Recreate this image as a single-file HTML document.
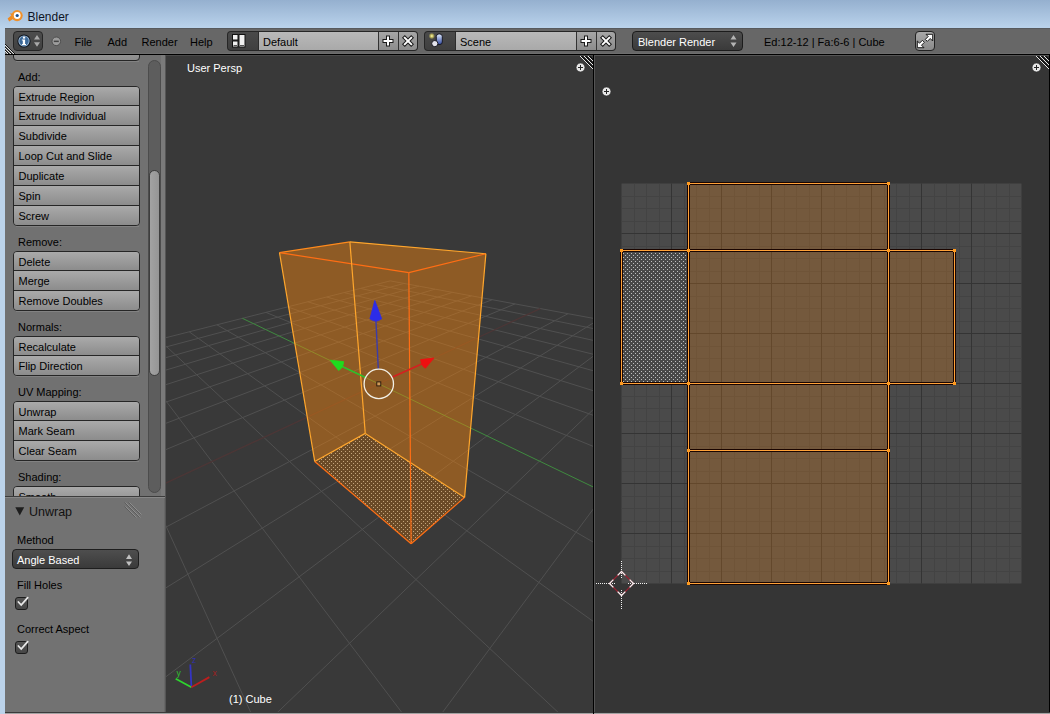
<!DOCTYPE html>
<html><head><meta charset="utf-8"><style>
*{margin:0;padding:0;box-sizing:border-box}
html,body{width:1050px;height:714px;overflow:hidden;background:#c8d7e6;font-family:"Liberation Sans", sans-serif}
.a{position:absolute}
.t{position:absolute;white-space:pre;font-size:11px;line-height:13px;color:#000}
.btn{position:absolute;left:13px;width:127px;background:linear-gradient(#a9a9a9,#8b8b8b);border:1px solid #2a2a2a}
</style></head><body>
<div class="a" style="left:0;top:0;width:1050px;height:28px;background:linear-gradient(#95b0cf,#bad3ec)"></div>
<div class="a" style="left:0;top:28px;width:5px;height:686px;background:#bcd3ea"></div>
<div class="t" style="left:27.5px;top:10px;font-size:12px;line-height:14px;color:#0e1424">Blender</div>
<div class="a" style="left:5px;top:28px;width:1045px;height:1px;background:#575a5e"></div><div class="a" style="left:5px;top:29px;width:1045px;height:24px;background:#676767"></div><div class="a" style="left:5px;top:53px;width:1045px;height:1px;background:#6e6e6e"></div><div class="a" style="left:13px;top:31px;width:30px;height:20px;border-radius:4px;background:linear-gradient(#4d4d4d,#414141);border:1px solid #262626"></div><svg class="a" style="left:13px;top:31px" width="30" height="20" viewBox="13 31 30 20">
<circle cx="24" cy="41" r="6.6" fill="#0e1520"/>
<circle cx="24" cy="41" r="5.6" fill="#9fbcd8"/>
<circle cx="24" cy="41" r="4.7" fill="#3b6898"/>
<rect x="22.9" y="36.6" width="2.3" height="2" fill="#fff"/>
<path d="M21.9 39.5H25.1V43.9H26V45.1H21.9V43.9H22.8V40.6H21.9Z" fill="#fff"/>
<path d="M34 39.6L37 35L40 39.6Z M34 42.2L37 46.8L40 42.2Z" fill="#a9a9a9"/>
</svg><svg class="a" style="left:50px;top:35px" width="13" height="13" viewBox="50 35 13 13">
<circle cx="56.3" cy="41.3" r="4.3" fill="#9c9c9c" stroke="#4e4e4e" stroke-width="1"/>
<rect x="53.8" y="40.6" width="5" height="1.5" fill="#454545"/>
</svg><div class="t" style="left:74.5px;top:36px;font-size:11px;color:#000">File</div><div class="t" style="left:107.5px;top:36px;font-size:11px;color:#000">Add</div><div class="t" style="left:141.5px;top:36px;font-size:11px;color:#000">Render</div><div class="t" style="left:190px;top:36px;font-size:11px;color:#000">Help</div><div class="a" style="left:227px;top:31px;width:191px;height:20px;border-radius:4px;background:#262626"></div><div class="a" style="left:228px;top:32px;width:30px;height:18px;border-radius:3px 0 0 3px;background:linear-gradient(#4a4a4a,#3f3f3f)"></div><div class="a" style="left:259px;top:32px;width:119px;height:18px;background:linear-gradient(#b9b9b9,#a9a9a9)"></div><div class="a" style="left:258px;top:32px;width:1px;height:18px;background:#2c2c2c"></div><div class="a" style="left:378px;top:32px;width:20px;height:18px;background:linear-gradient(#a6a6a6,#8c8c8c)"></div><div class="a" style="left:398px;top:32px;width:19px;height:18px;border-radius:0 3px 3px 0;background:linear-gradient(#a6a6a6,#8c8c8c)"></div><div class="a" style="left:378px;top:32px;width:1px;height:18px;background:#333"></div><div class="a" style="left:398px;top:32px;width:1px;height:18px;background:#333"></div><div class="t" style="left:263px;top:36px;font-size:11px;color:#000">Default</div><svg class="a" style="left:378px;top:31px" width="40" height="20" viewBox="378 31 40 20">
<path d="M382.5 41H393.5M388.0 35.5V46.5" stroke="#1a1a1a" stroke-width="4"/>
<path d="M383.5 41H392.5M388.0 36.5V45.5" stroke="#fff" stroke-width="2"/>
<path d="M403.4 36.4L412.6 45.6M412.6 36.4L403.4 45.6" stroke="#1a1a1a" stroke-width="4"/>
<path d="M404.1 37.1L411.9 44.9M411.9 37.1L404.1 44.9" stroke="#fff" stroke-width="2"/>
</svg><svg class="a" style="left:227px;top:31px" width="31" height="20" viewBox="227 31 31 20">
<rect x="232.5" y="34.5" width="5.5" height="5.5" fill="#f0f0f0" stroke="#111" stroke-width="1"/>
<rect x="232.5" y="41" width="5.5" height="6" fill="#f0f0f0" stroke="#111" stroke-width="1"/>
<rect x="239" y="34.5" width="6" height="12.5" fill="#f0f0f0" stroke="#111" stroke-width="1"/>
<rect x="233.5" y="45" width="3.5" height="1" fill="#555"/><rect x="240" y="45" width="4" height="1" fill="#555"/>
</svg><div class="a" style="left:424px;top:31px;width:192px;height:20px;border-radius:4px;background:#262626"></div><div class="a" style="left:425px;top:32px;width:30px;height:18px;border-radius:3px 0 0 3px;background:linear-gradient(#4a4a4a,#3f3f3f)"></div><div class="a" style="left:456px;top:32px;width:120px;height:18px;background:linear-gradient(#b9b9b9,#a9a9a9)"></div><div class="a" style="left:455px;top:32px;width:1px;height:18px;background:#2c2c2c"></div><div class="a" style="left:576px;top:32px;width:20px;height:18px;background:linear-gradient(#a6a6a6,#8c8c8c)"></div><div class="a" style="left:596px;top:32px;width:19px;height:18px;border-radius:0 3px 3px 0;background:linear-gradient(#a6a6a6,#8c8c8c)"></div><div class="a" style="left:576px;top:32px;width:1px;height:18px;background:#333"></div><div class="a" style="left:596px;top:32px;width:1px;height:18px;background:#333"></div><div class="t" style="left:460px;top:36px;font-size:11px;color:#000">Scene</div><svg class="a" style="left:576px;top:31px" width="40" height="20" viewBox="576 31 40 20">
<path d="M580.5 41H591.5M586.0 35.5V46.5" stroke="#1a1a1a" stroke-width="4"/>
<path d="M581.5 41H590.5M586.0 36.5V45.5" stroke="#fff" stroke-width="2"/>
<path d="M601.4 36.4L610.6 45.6M610.6 36.4L601.4 45.6" stroke="#1a1a1a" stroke-width="4"/>
<path d="M602.1 37.1L609.9 44.9M609.9 37.1L602.1 44.9" stroke="#fff" stroke-width="2"/>
</svg><svg class="a" style="left:424px;top:31px" width="31" height="20" viewBox="424 31 31 20">
<defs><radialGradient id="glow"><stop offset="0" stop-color="#ffffc0"/><stop offset="0.4" stop-color="#c8c060"/><stop offset="1" stop-color="#c8c060" stop-opacity="0"/></radialGradient>
<linearGradient id="cyl" x1="0" x2="0" y1="0" y2="1"><stop offset="0" stop-color="#e0ecff"/><stop offset="1" stop-color="#3048a0"/></linearGradient></defs>
<circle cx="431.8" cy="36" r="3.2" fill="url(#glow)"/>
<rect x="436.3" y="34" width="6" height="10.5" rx="2.5" fill="url(#cyl)" stroke="#101018" stroke-width="0.9"/>
<circle cx="434.8" cy="43.6" r="3.1" fill="#e4e4ec" stroke="#101018" stroke-width="0.9"/>
</svg><div class="a" style="left:632px;top:31px;width:111px;height:20px;border-radius:4px;background:linear-gradient(#4d4d4d,#3a3a3a);border:1px solid #1c1c1c"></div><div class="t" style="left:638px;top:36px;font-size:11px;color:#fff">Blender Render</div><svg class="a" style="left:725px;top:31px" width="15" height="20" viewBox="725 31 15 20">
<path d="M730.5 39.6L733.5 35L736.5 39.6Z M730.5 42.4L733.5 47L736.5 42.4Z" fill="#b4b4b4"/></svg><div class="t" style="left:764px;top:36px;font-size:11px;color:#000">Ed:12-12 | Fa:6-6 | Cube</div><div class="a" style="left:915px;top:31px;width:20px;height:20px;border-radius:4px;background:linear-gradient(#a8a8a8,#8a8a8a);border:1px solid #222"></div><svg class="a" style="left:915px;top:31px" width="20" height="20" viewBox="915 31 20 20">
<path d="M926 34.3H932.7V41L930.2 38.5L927.3 41.4L925.3 39.4L928.2 36.5Z" fill="#fff" stroke="#1a1a1a" stroke-width="1" stroke-linejoin="round"/>
<path d="M917.3 41V47.7H924L921.5 45.2L924.4 42.3L922.4 40.3L919.5 43.2Z" fill="#fff" stroke="#1a1a1a" stroke-width="1" stroke-linejoin="round"/>
</svg>
<div class="a" style="left:5px;top:54px;width:1045px;height:1px;background:#000"></div>
<div class="a" style="left:5px;top:55px;width:160px;height:441px;background:#717171;overflow:hidden"><div class="a" style="left:8px;top:-20px;width:127px;height:26px;border-radius:4px;border:1px solid #262626;background:linear-gradient(#aaaaaa,#8c8c8c)"></div><div class="a" style="left:11px;top:6px;width:123px;height:1px;background:#828282"></div><div class="t" style="left:13px;top:16.20px;color:#000">Add:</div><div class="a" style="left:8px;top:31px;width:127px;height:140px;border-radius:4px;border:1px solid #262626;overflow:hidden"><div class="a" style="left:0;top:0px;width:125px;height:18px;background:linear-gradient(#aaaaaa,#8c8c8c)"></div><div class="t" style="left:4.5px;top:3.70px;color:#000">Extrude Region</div><div class="a" style="left:0;top:19px;width:125px;height:19px;background:linear-gradient(#aaaaaa,#8c8c8c)"></div><div class="a" style="left:0;top:18px;width:125px;height:1px;background:#262626"></div><div class="t" style="left:4.5px;top:22.70px;color:#000">Extrude Individual</div><div class="a" style="left:0;top:39px;width:125px;height:19px;background:linear-gradient(#aaaaaa,#8c8c8c)"></div><div class="a" style="left:0;top:38px;width:125px;height:1px;background:#262626"></div><div class="t" style="left:4.5px;top:42.70px;color:#000">Subdivide</div><div class="a" style="left:0;top:59px;width:125px;height:19px;background:linear-gradient(#aaaaaa,#8c8c8c)"></div><div class="a" style="left:0;top:58px;width:125px;height:1px;background:#262626"></div><div class="t" style="left:4.5px;top:62.70px;color:#000">Loop Cut and Slide</div><div class="a" style="left:0;top:79px;width:125px;height:19px;background:linear-gradient(#aaaaaa,#8c8c8c)"></div><div class="a" style="left:0;top:78px;width:125px;height:1px;background:#262626"></div><div class="t" style="left:4.5px;top:82.70px;color:#000">Duplicate</div><div class="a" style="left:0;top:99px;width:125px;height:19px;background:linear-gradient(#aaaaaa,#8c8c8c)"></div><div class="a" style="left:0;top:98px;width:125px;height:1px;background:#262626"></div><div class="t" style="left:4.5px;top:102.70px;color:#000">Spin</div><div class="a" style="left:0;top:119px;width:125px;height:19px;background:linear-gradient(#aaaaaa,#8c8c8c)"></div><div class="a" style="left:0;top:118px;width:125px;height:1px;background:#262626"></div><div class="t" style="left:4.5px;top:122.70px;color:#000">Screw</div></div><div class="a" style="left:11px;top:171px;width:123px;height:1px;background:#828282"></div><div class="t" style="left:13px;top:181.20px;color:#000">Remove:</div><div class="a" style="left:8px;top:196px;width:127px;height:60px;border-radius:4px;border:1px solid #262626;overflow:hidden"><div class="a" style="left:0;top:0px;width:125px;height:18px;background:linear-gradient(#aaaaaa,#8c8c8c)"></div><div class="t" style="left:4.5px;top:3.70px;color:#000">Delete</div><div class="a" style="left:0;top:19px;width:125px;height:19px;background:linear-gradient(#aaaaaa,#8c8c8c)"></div><div class="a" style="left:0;top:18px;width:125px;height:1px;background:#262626"></div><div class="t" style="left:4.5px;top:22.70px;color:#000">Merge</div><div class="a" style="left:0;top:39px;width:125px;height:19px;background:linear-gradient(#aaaaaa,#8c8c8c)"></div><div class="a" style="left:0;top:38px;width:125px;height:1px;background:#262626"></div><div class="t" style="left:4.5px;top:42.70px;color:#000">Remove Doubles</div></div><div class="a" style="left:11px;top:256px;width:123px;height:1px;background:#828282"></div><div class="t" style="left:13px;top:266.20px;color:#000">Normals:</div><div class="a" style="left:8px;top:281px;width:127px;height:40px;border-radius:4px;border:1px solid #262626;overflow:hidden"><div class="a" style="left:0;top:0px;width:125px;height:18px;background:linear-gradient(#aaaaaa,#8c8c8c)"></div><div class="t" style="left:4.5px;top:3.70px;color:#000">Recalculate</div><div class="a" style="left:0;top:19px;width:125px;height:19px;background:linear-gradient(#aaaaaa,#8c8c8c)"></div><div class="a" style="left:0;top:18px;width:125px;height:1px;background:#262626"></div><div class="t" style="left:4.5px;top:22.70px;color:#000">Flip Direction</div></div><div class="a" style="left:11px;top:321px;width:123px;height:1px;background:#828282"></div><div class="t" style="left:13px;top:331.20px;color:#000">UV Mapping:</div><div class="a" style="left:8px;top:346px;width:127px;height:60px;border-radius:4px;border:1px solid #262626;overflow:hidden"><div class="a" style="left:0;top:0px;width:125px;height:18px;background:linear-gradient(#aaaaaa,#8c8c8c)"></div><div class="t" style="left:4.5px;top:3.70px;color:#000">Unwrap</div><div class="a" style="left:0;top:19px;width:125px;height:19px;background:linear-gradient(#aaaaaa,#8c8c8c)"></div><div class="a" style="left:0;top:18px;width:125px;height:1px;background:#262626"></div><div class="t" style="left:4.5px;top:22.70px;color:#000">Mark Seam</div><div class="a" style="left:0;top:39px;width:125px;height:19px;background:linear-gradient(#aaaaaa,#8c8c8c)"></div><div class="a" style="left:0;top:38px;width:125px;height:1px;background:#262626"></div><div class="t" style="left:4.5px;top:42.70px;color:#000">Clear Seam</div></div><div class="a" style="left:11px;top:406px;width:123px;height:1px;background:#828282"></div><div class="t" style="left:13px;top:416.20px;color:#000">Shading:</div><div class="a" style="left:8px;top:431px;width:127px;height:40px;border-radius:4px;border:1px solid #262626;overflow:hidden"><div class="a" style="left:0;top:0px;width:125px;height:18px;background:linear-gradient(#aaaaaa,#8c8c8c)"></div><div class="t" style="left:4.5px;top:3.70px;color:#000">Smooth</div><div class="a" style="left:0;top:19px;width:125px;height:19px;background:linear-gradient(#aaaaaa,#8c8c8c)"></div><div class="a" style="left:0;top:18px;width:125px;height:1px;background:#262626"></div><div class="t" style="left:4.5px;top:22.70px;color:#000">Flat</div></div><div class="a" style="left:11px;top:471px;width:123px;height:1px;background:#828282"></div><div class="a" style="left:143px;top:5px;width:13px;height:432.5px;border-radius:6.5px;background:#5d5d5d;border:1px solid #4c4c4c"></div><div class="a" style="left:144px;top:114.5px;width:11px;height:206.0px;border-radius:5.5px;background:linear-gradient(90deg,#a2a2a2,#959595);border:1px solid #3e3e3e"></div><div class="a" style="left:156px;top:0;width:4px;height:441px;background:#7a7a7a"></div></div><div class="a" style="left:5px;top:496px;width:160px;height:1px;background:#3c3c3c"></div><div class="a" style="left:5px;top:497px;width:160px;height:1px;background:#878787"></div><div class="a" style="left:5px;top:498px;width:160px;height:214px;background:#727272"></div><div class="a" style="left:165px;top:55px;width:1px;height:657px;background:#565656"></div><div class="a" style="left:164px;top:498px;width:1px;height:214px;background:#686868"></div><svg class="a" style="left:14px;top:506px" width="12" height="12" viewBox="14 506 12 12"><path d="M15.3 507.2H24.2L19.75 515.6Z" fill="#1e1e1e"/></svg><div class="t" style="left:29px;top:504.5px;font-size:12.5px;line-height:15px;color:#111">Unwrap</div><svg class="a" style="left:122px;top:500px" width="22" height="21" viewBox="122 500 22 21"><path d="M124.5 502.5L139.5 517.5M128.5 502.5L140.5 514.5M124.5 506.5L135.5 517.5" stroke="#5c5c5c" stroke-width="1"/><path d="M125.5 502.5L140.5 517.5M129.5 502.5L141.5 514.5M125.5 506.5L136.5 517.5" stroke="#8e8e8e" stroke-width="1"/></svg><div class="t" style="left:17px;top:534px;color:#000">Method</div><div class="a" style="left:12px;top:549px;width:127px;height:20px;border-radius:4px;background:linear-gradient(#4e4e4e,#3a3a3a);border:1px solid #1e1e1e"></div><div class="t" style="left:17px;top:554px;color:#fff">Angle Based</div><svg class="a" style="left:122px;top:550px" width="14" height="18" viewBox="122 550 14 18"><path d="M126 559L129 554.3L132 559Z M126 561.4L129 566L132 561.4Z" fill="#c0c0c0"/></svg><div class="t" style="left:17px;top:579px;color:#000">Fill Holes</div><div class="t" style="left:17px;top:623px;color:#000">Correct Aspect</div><div class="a" style="left:15px;top:597px;width:13px;height:13px;border-radius:3px;background:linear-gradient(#545454,#464646);border:1px solid #1c1c1c"></div><svg class="a" style="left:15px;top:595px" width="16" height="16" viewBox="0 0 16 16"><path d="M3.4 7L6.2 10L12.7 2.6" stroke="#e8e8e8" stroke-width="1.8" fill="none" stroke-linecap="round" stroke-linejoin="miter"/></svg><div class="a" style="left:15px;top:641px;width:13px;height:13px;border-radius:3px;background:linear-gradient(#545454,#464646);border:1px solid #1c1c1c"></div><svg class="a" style="left:15px;top:639px" width="16" height="16" viewBox="0 0 16 16"><path d="M3.4 7L6.2 10L12.7 2.6" stroke="#e8e8e8" stroke-width="1.8" fill="none" stroke-linecap="round" stroke-linejoin="miter"/></svg>
<svg width="427" height="657" viewBox="166 55 427 657" style="position:absolute;left:166px;top:55px"><defs><pattern id="stip3" x="0" y="0" width="4" height="4" patternUnits="userSpaceOnUse"><rect width="4" height="4" fill="#6a4a27"/><rect x="3" y="1" width="1" height="1" fill="#c4a57c"/><rect x="1" y="3" width="1" height="1" fill="#c4a57c"/></pattern></defs><rect x="166" y="55" width="427" height="657" fill="#393939"/><rect x="166" y="55" width="427" height="1" fill="#4a4a4a"/><path d="M547.17 -1112.42L-46.50 391.49M547.17 -1112.42L897.66 374.52M307.31 -2130.02L3.83 378.74M1131.23 -2591.97L828.06 361.67M-1811.96 -11120.91L48.81 367.36M-9517.84 24384.61L768.74 350.73M1760.01 4033.00L89.23 357.12M-874.91 2490.05L717.56 341.28M1237.44 1816.02L125.77 347.87M-447.74 1407.93L672.96 333.05M1095.65 1214.47L158.94 339.47M-295.81 1023.05L633.75 325.82M1029.59 934.20L189.21 331.81M-217.92 825.74L599.01 319.41M991.37 772.07L216.93 324.79M-170.55 705.74L568.02 313.69M948.93 592.04L265.91 312.38M-115.82 567.10L515.07 303.92M935.93 536.89L287.66 306.88M-98.59 523.44L492.28 299.71M925.91 494.35L307.84 301.77M-85.14 489.37L471.51 295.88M917.94 460.55L326.62 297.01M-74.35 462.04L452.51 292.37M911.45 433.04L344.14 292.58M-65.51 439.64L435.05 289.15M906.07 410.21L360.52 288.43M-58.12 420.94L418.96 286.18M901.54 390.96L375.87 284.54M-51.87 405.09L404.08 283.44M897.66 374.52L390.28 280.89M-46.50 391.49L390.28 280.89" stroke="#505050" stroke-width="1" fill="none"/><path d="M-138.70 625.06L540.19 308.55" stroke="#4c3636" stroke-width="1.3" fill="none"/><path d="M966.46 666.38L242.41 318.34" stroke="#3f8a3f" stroke-width="1" fill="none"/><polygon points="279.49,252.70 349.87,241.84 485.88,253.75 464.58,497.39 411.13,543.70 314.74,461.46" fill="rgba(250,135,12,0.44)"/><polygon points="314.74,461.46 365.27,433.38 464.58,497.39 411.13,543.70" fill="url(#stip3)"/><line x1="279.49" y1="252.70" x2="349.87" y2="241.84" stroke="#ff8a1c" stroke-width="1.2"/><line x1="349.87" y1="241.84" x2="485.88" y2="253.75" stroke="#ffa62c" stroke-width="1.2"/><line x1="485.88" y1="253.75" x2="408.82" y2="272.64" stroke="#ff6e14" stroke-width="1.2"/><line x1="408.82" y1="272.64" x2="279.49" y2="252.70" stroke="#ff6e14" stroke-width="1.2"/><line x1="314.74" y1="461.46" x2="365.27" y2="433.38" stroke="#ffa62c" stroke-width="1.2"/><line x1="365.27" y1="433.38" x2="464.58" y2="497.39" stroke="#ffa62c" stroke-width="1.2"/><line x1="464.58" y1="497.39" x2="411.13" y2="543.70" stroke="#ff6e14" stroke-width="1.2"/><line x1="411.13" y1="543.70" x2="314.74" y2="461.46" stroke="#ff6e14" stroke-width="1.2"/><line x1="279.49" y1="252.70" x2="314.74" y2="461.46" stroke="#ffa62c" stroke-width="1.2"/><line x1="349.87" y1="241.84" x2="365.27" y2="433.38" stroke="#ffa62c" stroke-width="1.2"/><line x1="485.88" y1="253.75" x2="464.58" y2="497.39" stroke="#ffa62c" stroke-width="1.2"/><line x1="408.82" y1="272.64" x2="411.13" y2="543.70" stroke="#ff6e14" stroke-width="1.2"/><line x1="378.3" y1="369" x2="375.8" y2="318" stroke="#3c3ca8" stroke-width="1.4"/><path d="M374.8 300.5L369.9 318.8Q375.8 323.5 381.7 318.8Z" fill="#2c2ce8" stroke="#2c2ce8" stroke-width="0.8" stroke-linejoin="round"/><line x1="365.5" y1="377.5" x2="340" y2="365.5" stroke="#2cc02c" stroke-width="1.4"/><path d="M330.2 360.2L343.6 361.6Q343.5 368 338.6 370.4Z" fill="#1edc1e" stroke="#1edc1e" stroke-width="0.8" stroke-linejoin="round"/><line x1="392.5" y1="377" x2="424" y2="363" stroke="#d42020" stroke-width="1.4"/><path d="M434 358L420.6 359.6Q421.5 366.5 425.4 368.2Z" fill="#ee1010" stroke="#ee1010" stroke-width="0.8" stroke-linejoin="round"/><circle cx="378.8" cy="383.9" r="14.7" fill="none" stroke="#f2f0e6" stroke-width="1.3"/><rect x="376.8" y="381.9" width="4" height="4" fill="#d09a58" stroke="#20140a" stroke-width="0.9"/><line x1="191.4" y1="687.2" x2="190.3" y2="664.5" stroke="#3434c4" stroke-width="1.8"/><line x1="191.4" y1="687.2" x2="175.7" y2="678.7" stroke="#2ed42e" stroke-width="1.8"/><line x1="191.4" y1="687.2" x2="209.4" y2="677.1" stroke="#bc1e1e" stroke-width="1.8"/><text x="192" y="663" font-family='"Liberation Sans", sans-serif' font-size="8.5" fill="#3030b0">z</text><text x="176.5" y="675.5" font-family='"Liberation Sans", sans-serif' font-size="8.5" fill="#30c030">y</text><text x="212.5" y="676" font-family='"Liberation Sans", sans-serif' font-size="8.5" fill="#a02020">x</text></svg>
<div class="a" style="left:593px;top:55px;width:1px;height:657px;background:#000"></div>
<div class="a" style="left:594px;top:55px;width:1px;height:657px;background:#555"></div>
<svg width="454" height="657" viewBox="595 55 454 657" style="position:absolute;left:595px;top:55px"><defs><pattern id="stipuv" x="0" y="0" width="4" height="4" patternUnits="userSpaceOnUse"><rect width="4" height="4" fill="#484848"/><rect x="3" y="1" width="1" height="1" fill="#c0c0c0"/><rect x="1" y="3" width="1" height="1" fill="#c0c0c0"/></pattern></defs><rect x="595" y="55" width="454" height="657" fill="#353535"/><rect x="595" y="55" width="454" height="1" fill="#555555"/><rect x="621.5" y="183.5" width="400" height="400" fill="#4a4a4a"/><path d="M634.5 183.5V583.5M621.5 196.5H1021.5M646.5 183.5V583.5M621.5 208.5H1021.5M659.5 183.5V583.5M621.5 221.5H1021.5M684.5 183.5V583.5M621.5 246.5H1021.5M696.5 183.5V583.5M621.5 258.5H1021.5M709.5 183.5V583.5M621.5 271.5H1021.5M734.5 183.5V583.5M621.5 296.5H1021.5M746.5 183.5V583.5M621.5 308.5H1021.5M759.5 183.5V583.5M621.5 321.5H1021.5M784.5 183.5V583.5M621.5 346.5H1021.5M796.5 183.5V583.5M621.5 358.5H1021.5M809.5 183.5V583.5M621.5 371.5H1021.5M834.5 183.5V583.5M621.5 396.5H1021.5M846.5 183.5V583.5M621.5 408.5H1021.5M859.5 183.5V583.5M621.5 421.5H1021.5M884.5 183.5V583.5M621.5 446.5H1021.5M896.5 183.5V583.5M621.5 458.5H1021.5M909.5 183.5V583.5M621.5 471.5H1021.5M934.5 183.5V583.5M621.5 496.5H1021.5M946.5 183.5V583.5M621.5 508.5H1021.5M959.5 183.5V583.5M621.5 521.5H1021.5M984.5 183.5V583.5M621.5 546.5H1021.5M996.5 183.5V583.5M621.5 558.5H1021.5M1009.5 183.5V583.5M621.5 571.5H1021.5" stroke="#434343" stroke-width="1"/><path d="M671.5 183.5V583.5M621.5 233.5H1021.5M721.5 183.5V583.5M621.5 283.5H1021.5M771.5 183.5V583.5M621.5 333.5H1021.5M821.5 183.5V583.5M621.5 383.5H1021.5M871.5 183.5V583.5M621.5 433.5H1021.5M921.5 183.5V583.5M621.5 483.5H1021.5M971.5 183.5V583.5M621.5 533.5H1021.5" stroke="#343434" stroke-width="1"/><rect x="688.5" y="183.5" width="200.0" height="67.0" fill="rgba(255,140,20,0.235)"/><rect x="688.5" y="250.5" width="200.0" height="133.0" fill="rgba(255,140,20,0.235)"/><rect x="621.5" y="250.5" width="67.0" height="133.0" fill="url(#stipuv)"/><rect x="888.5" y="250.5" width="66.0" height="133.0" fill="rgba(255,140,20,0.235)"/><rect x="688.5" y="383.5" width="200.0" height="67.0" fill="rgba(255,140,20,0.235)"/><rect x="688.5" y="450.5" width="200.0" height="133.0" fill="rgba(255,140,20,0.235)"/><path d="M688.5 183.5H888.5V250.5H688.5ZM688.5 250.5H888.5V383.5H688.5ZM621.5 250.5H688.5V383.5H621.5ZM888.5 250.5H954.5V383.5H888.5ZM688.5 383.5H888.5V450.5H688.5ZM688.5 450.5H888.5V583.5H688.5Z" stroke="#1a0500" stroke-width="3" fill="none"/><path d="M688.5 183.5H888.5V250.5H688.5ZM688.5 250.5H888.5V383.5H688.5ZM621.5 250.5H688.5V383.5H621.5ZM888.5 250.5H954.5V383.5H888.5ZM688.5 383.5H888.5V450.5H688.5ZM688.5 450.5H888.5V583.5H688.5Z" stroke="#ffa238" stroke-width="1" fill="none"/><rect x="887.0" y="449.0" width="3" height="3" fill="#ff9a1e"/><rect x="687.0" y="382.0" width="3" height="3" fill="#ff9a1e"/><rect x="887.0" y="249.0" width="3" height="3" fill="#ff9a1e"/><rect x="887.0" y="182.0" width="3" height="3" fill="#ff9a1e"/><rect x="953.0" y="249.0" width="3" height="3" fill="#ff9a1e"/><rect x="687.0" y="182.0" width="3" height="3" fill="#ff9a1e"/><rect x="620.0" y="249.0" width="3" height="3" fill="#ff9a1e"/><rect x="687.0" y="449.0" width="3" height="3" fill="#ff9a1e"/><rect x="687.0" y="249.0" width="3" height="3" fill="#ff9a1e"/><rect x="887.0" y="582.0" width="3" height="3" fill="#ff9a1e"/><rect x="687.0" y="582.0" width="3" height="3" fill="#ff9a1e"/><rect x="887.0" y="382.0" width="3" height="3" fill="#ff9a1e"/><rect x="953.0" y="382.0" width="3" height="3" fill="#ff9a1e"/><rect x="620.0" y="382.0" width="3" height="3" fill="#ff9a1e"/><path d="M596 583h1v1h-1zM598 583h1v1h-1zM600 583h1v1h-1zM602 583h1v1h-1zM604 583h1v1h-1zM606 583h1v1h-1zM608 583h1v1h-1zM610 583h1v1h-1zM612 583h1v1h-1zM614 583h1v1h-1zM628 583h1v1h-1zM630 583h1v1h-1zM632 583h1v1h-1zM634 583h1v1h-1zM636 583h1v1h-1zM638 583h1v1h-1zM640 583h1v1h-1zM642 583h1v1h-1zM644 583h1v1h-1zM646 583h1v1h-1zM621 561h1v1h-1zM621 563h1v1h-1zM621 565h1v1h-1zM621 567h1v1h-1zM621 569h1v1h-1zM621 571h1v1h-1zM621 573h1v1h-1zM621 575h1v1h-1zM621 577h1v1h-1zM621 590h1v1h-1zM621 592h1v1h-1zM621 594h1v1h-1zM621 596h1v1h-1zM621 598h1v1h-1zM621 600h1v1h-1zM621 602h1v1h-1zM621 604h1v1h-1zM621 606h1v1h-1zM621 608h1v1h-1z" fill="#f0f0f0"/><polygon points="621.5,571.5 633.5,583.5 621.5,595.5 609.5,583.5" fill="none" stroke="#9a2030" stroke-width="1.2"/><polygon points="621.5,571.5 633.5,583.5 621.5,595.5 609.5,583.5" fill="none" stroke="#f4f4f4" stroke-width="1.3" stroke-dasharray="5.5 6 5.47 0" /></svg>
<div class="a" style="left:1049px;top:55px;width:1px;height:657px;background:#000"></div>
<svg class="a" style="left:5px;top:7px" width="20" height="17" viewBox="5 7 20 17">
<path d="M7.6 18.6L11.6 15.3L9.6 13.6H14L15.4 12.3L17.6 13.9L12.2 19.6L9.2 21.4Z" fill="#ee8a22"/>
<circle cx="17.1" cy="15.6" r="5.6" fill="#f0902a"/>
<circle cx="17.2" cy="15.5" r="3.4" fill="#ffffff"/>
<circle cx="17.2" cy="15.5" r="1.6" fill="#1f4f8c"/>
</svg><div class="t" style="left:187px;top:62px;color:#fff">User Persp</div><div class="t" style="left:229px;top:693px;color:#fff">(1) Cube</div><svg class="a" style="left:574px;top:61px" width="13" height="13" viewBox="574 61 13 13"><circle cx="580.5" cy="67.5" r="4.4" fill="#e8e8e8" stroke="#2a2a2a" stroke-width="0.6"/><rect x="578" y="67" width="5" height="1" fill="#262626"/><rect x="580" y="65" width="1" height="5" fill="#262626"/></svg><svg class="a" style="left:1030px;top:61px" width="13" height="13" viewBox="1030 61 13 13"><circle cx="1036.5" cy="67.5" r="4.4" fill="#e8e8e8" stroke="#2a2a2a" stroke-width="0.6"/><rect x="1034" y="67" width="5" height="1" fill="#262626"/><rect x="1036" y="65" width="1" height="5" fill="#262626"/></svg><svg class="a" style="left:600px;top:85px" width="13" height="13" viewBox="600 85 13 13"><circle cx="606.5" cy="91.5" r="4.4" fill="#e8e8e8" stroke="#2a2a2a" stroke-width="0.6"/><rect x="604" y="91" width="5" height="1" fill="#262626"/><rect x="606" y="89" width="1" height="5" fill="#262626"/></svg><svg class="a" style="left:579px;top:55px" width="15" height="15" viewBox="579 55 15 15"><path d="M581 56h1v1h-1zM582 57h1v1h-1zM583 58h1v1h-1zM584 59h1v1h-1zM585 60h1v1h-1zM586 61h1v1h-1zM587 62h1v1h-1zM588 63h1v1h-1zM589 64h1v1h-1zM590 65h1v1h-1zM591 66h1v1h-1zM592 67h1v1h-1zM582 56h1v1h-1zM583 57h1v1h-1zM584 58h1v1h-1zM585 59h1v1h-1zM586 60h1v1h-1zM587 61h1v1h-1zM588 62h1v1h-1zM589 63h1v1h-1zM590 64h1v1h-1zM591 65h1v1h-1zM592 66h1v1h-1zM585 56h1v1h-1zM586 57h1v1h-1zM587 58h1v1h-1zM588 59h1v1h-1zM589 60h1v1h-1zM590 61h1v1h-1zM591 62h1v1h-1zM592 63h1v1h-1zM586 56h1v1h-1zM587 57h1v1h-1zM588 58h1v1h-1zM589 59h1v1h-1zM590 60h1v1h-1zM591 61h1v1h-1zM592 62h1v1h-1zM589 56h1v1h-1zM590 57h1v1h-1zM591 58h1v1h-1zM592 59h1v1h-1zM590 56h1v1h-1zM591 57h1v1h-1zM592 58h1v1h-1z" fill="#141414"/><path d="M580 56h1v1h-1zM581 57h1v1h-1zM582 58h1v1h-1zM583 59h1v1h-1zM584 60h1v1h-1zM585 61h1v1h-1zM586 62h1v1h-1zM587 63h1v1h-1zM588 64h1v1h-1zM589 65h1v1h-1zM590 66h1v1h-1zM591 67h1v1h-1zM592 68h1v1h-1zM584 56h1v1h-1zM585 57h1v1h-1zM586 58h1v1h-1zM587 59h1v1h-1zM588 60h1v1h-1zM589 61h1v1h-1zM590 62h1v1h-1zM591 63h1v1h-1zM592 64h1v1h-1zM588 56h1v1h-1zM589 57h1v1h-1zM590 58h1v1h-1zM591 59h1v1h-1zM592 60h1v1h-1z" fill="#e8e8e8"/></svg><svg class="a" style="left:1035px;top:55px" width="15" height="15" viewBox="1035 55 15 15"><path d="M1037 56h1v1h-1zM1038 57h1v1h-1zM1039 58h1v1h-1zM1040 59h1v1h-1zM1041 60h1v1h-1zM1042 61h1v1h-1zM1043 62h1v1h-1zM1044 63h1v1h-1zM1045 64h1v1h-1zM1046 65h1v1h-1zM1047 66h1v1h-1zM1048 67h1v1h-1zM1038 56h1v1h-1zM1039 57h1v1h-1zM1040 58h1v1h-1zM1041 59h1v1h-1zM1042 60h1v1h-1zM1043 61h1v1h-1zM1044 62h1v1h-1zM1045 63h1v1h-1zM1046 64h1v1h-1zM1047 65h1v1h-1zM1048 66h1v1h-1zM1041 56h1v1h-1zM1042 57h1v1h-1zM1043 58h1v1h-1zM1044 59h1v1h-1zM1045 60h1v1h-1zM1046 61h1v1h-1zM1047 62h1v1h-1zM1048 63h1v1h-1zM1042 56h1v1h-1zM1043 57h1v1h-1zM1044 58h1v1h-1zM1045 59h1v1h-1zM1046 60h1v1h-1zM1047 61h1v1h-1zM1048 62h1v1h-1zM1045 56h1v1h-1zM1046 57h1v1h-1zM1047 58h1v1h-1zM1048 59h1v1h-1zM1046 56h1v1h-1zM1047 57h1v1h-1zM1048 58h1v1h-1z" fill="#141414"/><path d="M1036 56h1v1h-1zM1037 57h1v1h-1zM1038 58h1v1h-1zM1039 59h1v1h-1zM1040 60h1v1h-1zM1041 61h1v1h-1zM1042 62h1v1h-1zM1043 63h1v1h-1zM1044 64h1v1h-1zM1045 65h1v1h-1zM1046 66h1v1h-1zM1047 67h1v1h-1zM1048 68h1v1h-1zM1040 56h1v1h-1zM1041 57h1v1h-1zM1042 58h1v1h-1zM1043 59h1v1h-1zM1044 60h1v1h-1zM1045 61h1v1h-1zM1046 62h1v1h-1zM1047 63h1v1h-1zM1048 64h1v1h-1zM1044 56h1v1h-1zM1045 57h1v1h-1zM1046 58h1v1h-1zM1047 59h1v1h-1zM1048 60h1v1h-1z" fill="#e8e8e8"/></svg><svg class="a" style="left:5px;top:43px" width="11" height="11" viewBox="5 43 11 11"><path d="M5 44h1v1h-1zM6 45h1v1h-1zM7 46h1v1h-1zM8 47h1v1h-1zM9 48h1v1h-1zM10 49h1v1h-1zM11 50h1v1h-1zM12 51h1v1h-1zM13 52h1v1h-1zM14 53h1v1h-1zM5 47h1v1h-1zM6 48h1v1h-1zM7 49h1v1h-1zM8 50h1v1h-1zM9 51h1v1h-1zM10 52h1v1h-1zM11 53h1v1h-1zM5 50h1v1h-1zM6 51h1v1h-1zM7 52h1v1h-1zM8 53h1v1h-1z" fill="#111"/><path d="M5 45h1v1h-1zM6 46h1v1h-1zM7 47h1v1h-1zM8 48h1v1h-1zM9 49h1v1h-1zM10 50h1v1h-1zM11 51h1v1h-1zM12 52h1v1h-1zM13 53h1v1h-1zM5 48h1v1h-1zM6 49h1v1h-1zM7 50h1v1h-1zM8 51h1v1h-1zM9 52h1v1h-1zM10 53h1v1h-1zM5 51h1v1h-1zM6 52h1v1h-1zM7 53h1v1h-1z" fill="#e6e6e6"/></svg>
<div class="a" style="left:5px;top:712px;width:1045px;height:1px;background:#3a3a3a"></div>
<div class="a" style="left:5px;top:713px;width:1045px;height:1px;background:#a2a2a2"></div>
<div class="a" style="left:593px;top:712px;width:1px;height:2px;background:#000"></div>
</body></html>
